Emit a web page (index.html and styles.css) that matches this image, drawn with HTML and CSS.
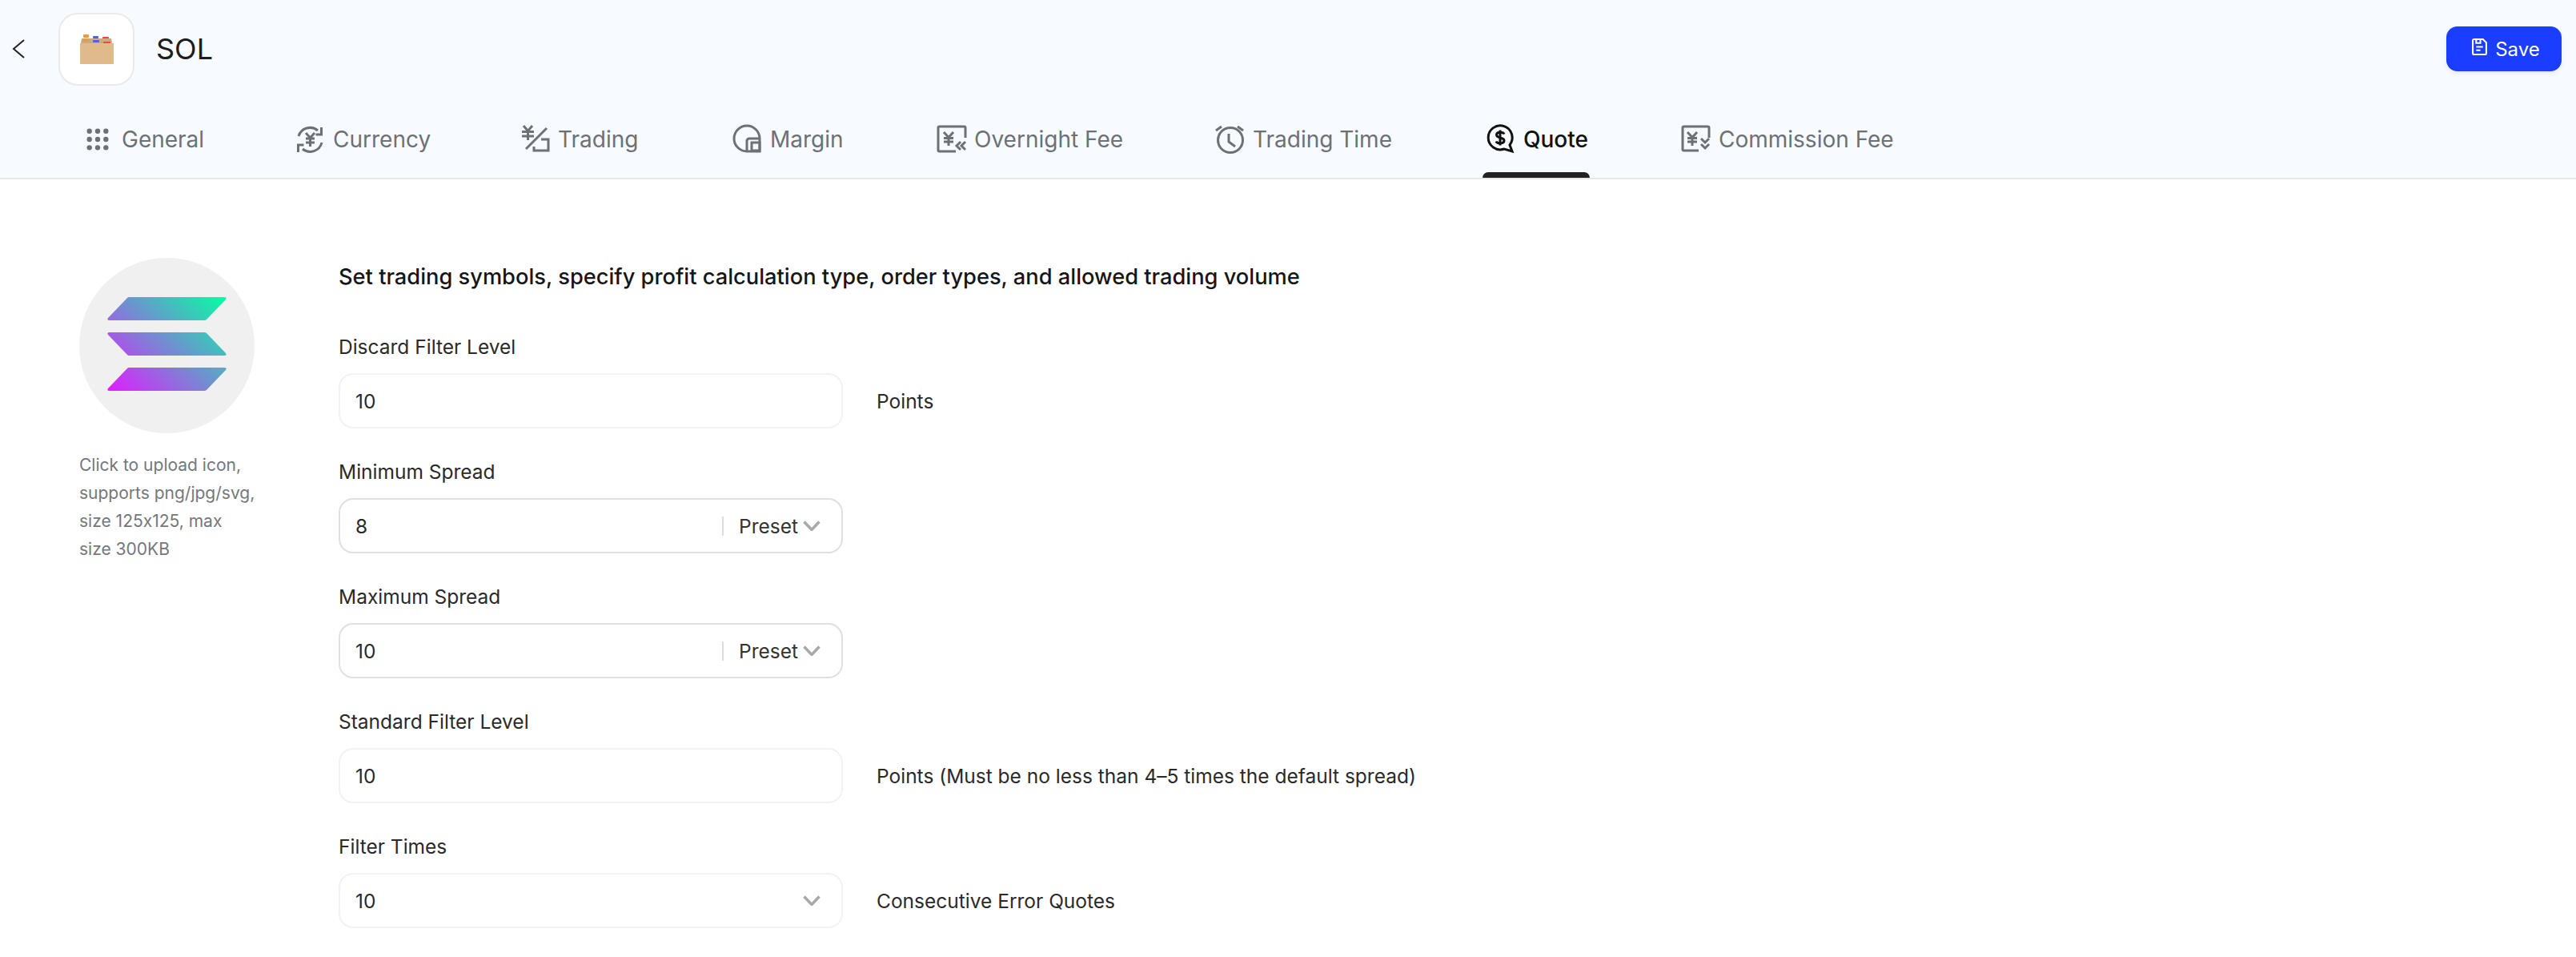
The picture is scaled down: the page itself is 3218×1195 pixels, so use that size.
FILE: index.html
```html
<!DOCTYPE html>
<html lang="en">
<head>
<meta charset="utf-8">
<title>SOL - Quote</title>
<link rel="stylesheet" href="styles.css">
</head>
<body>
<header class="top">
  <div class="top-row">
    <svg class="back" viewBox="0 0 16 24"><path d="M15 1 2 12l13 11"/></svg>
    <div class="logo-box">
      <svg viewBox="0 0 44 40" class="box-art">
        <rect x="5" y="2" width="7" height="4" rx="1" fill="#f6953a"/>
        <rect x="17" y="4" width="7" height="3" rx="1" fill="#4a63ee"/>
        <rect x="29" y="5" width="8" height="3" rx="1" fill="#f0473f"/>
        <path d="M3 7h37l1 6H2z" fill="#c9ab7f"/>
        <rect x="4" y="8" width="8" height="3" rx="1" fill="#f6953a"/>
        <rect x="17" y="9" width="8" height="3" rx="1" fill="#4a63ee"/>
        <rect x="30" y="11" width="9" height="3" rx="1" fill="#f0473f"/>
        <rect x="1" y="13" width="42" height="26" fill="#e0ba8b"/>
      </svg>
    </div>
    <h1 class="sym">SOL</h1>
    <button class="save">
      <svg viewBox="0 0 20 20" class="save-icon"><path d="M2 2.500A1.500 1.500 0 0 1 3.500 1H14l4 4v12.500a1.500 1.500 0 0 1-1.500 1.500h-13A1.500 1.500 0 0 1 2 17.500zM6 1v4.500h5V1M6 10h8M6 14h5"/></svg>
      <span>Save</span>
    </button>
  </div>
  <nav class="tabs">
    <a class="tab t-general">
      <svg viewBox="0 0 32 32" class="ico dots"><circle cx="5" cy="5" r="3.400"/><circle cx="16" cy="5" r="3.400"/><circle cx="27" cy="5" r="3.400"/><circle cx="5" cy="16" r="3.400"/><circle cx="16" cy="16" r="3.400"/><circle cx="27" cy="16" r="3.400"/><circle cx="5" cy="27" r="3.400"/><circle cx="16" cy="27" r="3.400"/><circle cx="27" cy="27" r="3.400"/></svg>
      <span>General</span>
    </a>
    <a class="tab t-currency">
      <svg viewBox="0 0 36 36" class="ico"><path d="M4 14A15 15 0 0 1 28 7M33 22A15 15 0 0 1 9 30M32.500 3v9h-7M3.500 34v-9h7"/><path d="m13 10 5.500 6 5.500-6M18.500 16v11M13 17h11M13 22h11"/></svg>
      <span>Currency</span>
    </a>
    <a class="tab t-trading">
      <svg viewBox="0 0 36 36" class="ico"><path d="m4 1 5.500 6.500L15 1M9.500 7.500V19M2 8.500h15M2 14h15M33 4 7 30M17 27v5h18V18h-9"/></svg>
      <span>Trading</span>
    </a>
    <a class="tab t-margin">
      <svg viewBox="0 0 36 36" class="ico"><path d="M18 33A16 16 0 1 1 34 17H21a3 3 0 0 0-3 3v13zM34 17v16H18"/><rect x="24" y="22" width="10" height="10"/></svg>
      <span>Margin</span>
    </a>
    <a class="tab t-overnight">
      <svg viewBox="0 0 36 36" class="ico"><path d="M24 33H3.500A1.500 1.500 0 0 1 2 31.500v-28A1.500 1.500 0 0 1 3.500 2h31A1.500 1.500 0 0 1 36 3.500V16"/><path d="m9 9 6 6.500L21 9M15 15.500V26M9 16.500h12M9 21h12M30 21l-5 5 5 5M36 21l-5 5 5 5"/></svg>
      <span>Overnight Fee</span>
    </a>
    <a class="tab t-time">
      <svg viewBox="0 0 36 36" class="ico"><circle cx="19" cy="19" r="15.500"/><path d="M17 11v10l8 6M1 7l7-5M35 7l-7-5"/></svg>
      <span>Trading Time</span>
    </a>
    <a class="tab active t-quote">
      <svg viewBox="0 0 36 36" class="ico"><path d="M30 25A15 15 0 1 0 23 30L33 33z"/><path d="M23 11.500c-1-3-9.500-3.500-9.500 1 0 4.500 9.500 2.500 9.500 7 0 4.500-9 4-10 1M18 6.500v19"/></svg>
      <span>Quote</span>
    </a>
    <a class="tab t-commission">
      <svg viewBox="0 0 36 36" class="ico"><path d="M22 32H3.500A1.500 1.500 0 0 1 2 30.500v-27A1.500 1.500 0 0 1 3.500 2h30A1.500 1.500 0 0 1 35 3.500V16"/><path d="m8 9 6 6.500L20 9M14 15.500V26M8 16.500h12M8 21h12M25 17l5 5 5-5M25 24l5 5 5-5"/></svg>
      <span>Commission Fee</span>
    </a>
  </nav>
</header>
<main class="content">
  <aside class="side">
    <div class="coin">
      <svg viewBox="0 0 149 117" class="sol">
        <defs>
          <linearGradient id="g" gradientUnits="userSpaceOnUse" x1="0" y1="117" x2="125" y2="-14">
            <stop offset="0" stop-color="#e01cff"/>
            <stop offset="1" stop-color="#0cf7a6"/>
          </linearGradient>
        </defs>
        <path fill="url(#g)" d="M27 0h119q4 0 2 3l-24 25q-1 1-3 1H3q-4 0-2-3L25 1q1-1 2-1z"/>
        <path fill="url(#g)" d="M27 44h94q2 0 3 1l24 25q2 3-2 3H27q-1 0-2-1L1 47q-2-3 2-3z"/>
        <path fill="url(#g)" d="M27 88h119q4 0 2 3l-24 25q-1 1-3 1H3q-4 0-2-3l24-25q1-1 2-1z"/>
      </svg>
    </div>
    <p class="hint">Click to upload icon, supports png/jpg/svg, size 125x125, max size 300KB</p>
  </aside>
  <section class="form">
    <h2 class="title">Set trading symbols, specify profit calculation type, order types, and allowed trading volume</h2>
    <div class="field">
      <label>Discard Filter Level</label>
      <div class="line"><div class="input"><span class="val">10</span></div><span class="unit">Points</span></div>
    </div>
    <div class="field">
      <label>Minimum Spread</label>
      <div class="line"><div class="input strong"><span class="val">8</span><span class="preset">Preset</span><svg class="chev" viewBox="0 0 22 13"><path d="m1.500 1.500 9.500 10 9.500-10"/></svg></div></div>
    </div>
    <div class="field">
      <label>Maximum Spread</label>
      <div class="line"><div class="input strong"><span class="val">10</span><span class="preset">Preset</span><svg class="chev" viewBox="0 0 22 13"><path d="m1.500 1.500 9.500 10 9.500-10"/></svg></div></div>
    </div>
    <div class="field">
      <label>Standard Filter Level</label>
      <div class="line"><div class="input"><span class="val">10</span></div><span class="unit">Points (Must be no less than 4–5 times the default spread)</span></div>
    </div>
    <div class="field">
      <label>Filter Times</label>
      <div class="line"><div class="input"><span class="val">10</span><svg class="chev" viewBox="0 0 22 13"><path d="m1.500 1.500 9.500 10 9.500-10"/></svg></div><span class="unit">Consecutive Error Quotes</span></div>
    </div>
  </section>
</main>
</body>
</html>
```

FILE: styles.css
```css
* { box-sizing: border-box; }
html, body { height: 100%; }
body {
  margin: 0;
  height: 1195px;
  overflow: hidden;
  background: #fff;
  color: #1f1f1f;
  font-family: Inter, "Noto Sans", sans-serif;
  font-feature-settings: "calt" 0;
}
.top {
  height: 224px;
  background: #f7fbff;
  border-bottom: 2px solid #e6e8ea;
}
.top-row {
  display: flex;
  align-items: center;
  height: 122px;
  padding: 0 18px 0 15px;
}
.back {
  width: 16px;
  height: 24px;
  fill: none;
  stroke: #222;
  stroke-width: 2;
}
.logo-box {
  width: 95px;
  height: 91px;
  margin-left: 42px;
  display: flex;
  align-items: center;
  justify-content: center;
  background: #fff;
  border: 2px solid #eaeaea;
  border-radius: 24px;
}
.box-art { width: 44px; height: 40px; }
.sym {
  margin: 0 auto 0 27px;
  font-size: 36px;
  font-weight: 400;
  color: #1d1d1d;
}
.save {
  display: flex;
  align-items: center;
  justify-content: center;
  gap: 9px;
  width: 144px;
  height: 56px;
  padding: 0 0 0 4px;
  border: 0;
  border-radius: 14px;
  background: #1a3dff;
  color: #fff;
  font: 400 24px Inter, sans-serif;
  box-shadow: 0 3px 6px rgba(26, 61, 255, .08);
}
.save-icon {
  width: 21px;
  height: 21px;
  margin-top: -5px;
  fill: none;
  stroke: #fff;
  stroke-width: 2;
}
.tabs {
  display: flex;
  height: 100px;
  padding-left: 103px;
}
.tab {
  position: relative;
  display: flex;
  align-items: center;
  gap: 11px;
  height: 100px;
  padding: 4px 0 0 4px;
  font-size: 28px;
  color: #6d7175;
}
.t-general { width: 262px; }
.t-currency { width: 281px; }
.t-trading { width: 265px; }
.t-margin { width: 255px; }
.t-overnight { width: 348px; }
.t-time { width: 338px; }
.t-quote { width: 244px; }
.tab.active { color: #111; font-weight: 500; }
.tab.active::after {
  content: "";
  position: absolute;
  left: 0;
  bottom: 0;
  width: 134px;
  height: 7px;
  border-radius: 7px 7px 0 0;
  background: #222;
}
.ico {
  width: 36px;
  height: 36px;
  flex: none;
  overflow: visible;
  fill: none;
  stroke: currentColor;
  stroke-width: 3;
}
.ico.dots { width: 30px; height: 30px; margin-right: 4px; fill: currentColor; stroke: none; }
.content {
  display: flex;
  padding: 98px 0 0 99px;
}
.side { width: 324px; flex: none; }
.coin {
  width: 219px;
  height: 219px;
  display: flex;
  align-items: center;
  justify-content: center;
  border-radius: 50%;
  background: #f0f0f0;
}
.sol { width: 149px; height: 117px; margin-bottom: 4px; }
.hint {
  width: 222px;
  margin: 22px 0 0;
  font-size: 21px;
  line-height: 35px;
  color: #74777c;
}
.form { flex: 1; margin-top: 2px; }
.title {
  margin: 0;
  font-size: 27.250px;
  font-weight: 500;
  line-height: 44px;
  color: #161616;
}
.field { margin-top: 47px; }
.field + .field { margin-top: 36px; }
.field label {
  display: block;
  font-size: 24.500px;
  line-height: 36px;
  color: #2a2a2a;
}
.line {
  display: flex;
  align-items: center;
  margin-top: 15px;
}
.input {
  display: flex;
  align-items: center;
  width: 630px;
  height: 69px;
  padding: 0 26px 0 19px;
  border: 2px solid #f2f2f2;
  border-radius: 18px;
  background: #fff;
}
.input.strong { border-color: #e0e0e0; }
.val { flex: 1; font-size: 24.500px; color: #2a2a2a; }
.preset {
  padding-left: 19px;
  border-left: 2px solid #dcdcdc;
  line-height: 24px;
  font-size: 24.500px;
  color: #333;
}
.chev {
  width: 22px;
  height: 13px;
  margin-left: 6px;
  fill: none;
  stroke: #a9a9a9;
  stroke-width: 3.500;
}
.unit {
  margin-left: 42px;
  font-size: 24.500px;
  color: #2a2a2a;
}
```
